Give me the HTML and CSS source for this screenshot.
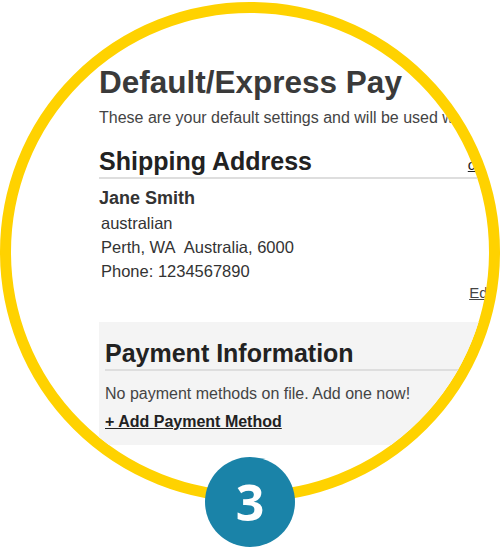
FILE: index.html
```html
<!DOCTYPE html>
<html lang="en">
<head>
    <meta charset="UTF-8">
    <title>Default/Express Pay</title>
    <link rel="stylesheet" href="styles.css">
</head>
<body>
    <div class="ring">
        <div class="panel">
            <h1>Default/Express Pay</h1>
            <p class="intro">These are your default settings and will be used when you check out with Express Pay.</p>

            <div class="section-head">
                <h2>Shipping Address</h2>
                <a href="#" class="change">change</a>
            </div>
            <div class="address">
                <div class="name">Jane Smith</div>
                <div class="line">australian</div>
                <div class="line">Perth, WA&nbsp; Australia, 6000</div>
                <div class="line">Phone: 1234567890</div>
            </div>
            <div class="edit-row"><a href="#" class="edit">Edit</a></div>

            <div class="payment">
                <h2>Payment Information</h2>
                <p class="empty">No payment methods on file. Add one now!</p>
                <a href="#" class="add">+ Add Payment Method</a>
            </div>
        </div>
    </div>
    <div class="step">3</div>
</body>
</html>
```

FILE: styles.css
```css
body {
    margin: 0;
    width: 500px;
    height: 555px;
    background-color: #fff;
    font-family: "Liberation Sans", Arial, sans-serif;
    color: #333;
    overflow: hidden;
}
.ring {
    width: 500px;
    height: 500px;
    margin-top: 2px;
    box-sizing: border-box;
    border: 11px solid #ffd200;
    border-radius: 50%;
    overflow: hidden;
    padding: 51px 0 0 88px;
}
.panel {
    width: 420px;
}
h1 {
    margin: 0;
    font-size: 31.5px;
    line-height: 36px;
    color: #3a3a3a;
}
.intro {
    margin: 8px 0 0;
    font-size: 16px;
    line-height: 20px;
    color: #444;
    white-space: nowrap;
}
.section-head {
    display: flex;
    justify-content: space-between;
    align-items: baseline;
    margin-top: 19px;
    padding-bottom: 2px;
    border-bottom: 2px solid #dedede;
}
h2 {
    margin: 0;
    font-size: 25px;
    line-height: 28px;
    color: #222;
}
.change {
    font-size: 15px;
    color: #222;
    margin-right: 2px;
}
.address {
    margin-top: 8px;
}
.name {
    font-size: 18px;
    line-height: 22px;
    font-weight: bold;
    color: #333;
    margin-bottom: 2px;
}
.line {
    font-size: 16.5px;
    line-height: 24px;
    padding-left: 2px;
    color: #333;
}
.edit-row {
    text-align: right;
    padding-right: 24px;
    font-size: 15px;
    line-height: 20px;
}
.edit {
    color: #444;
}
.payment {
    margin-top: 19px;
    background-color: #f4f4f4;
    padding: 17px 0 13px 6px;
}
.payment h2 {
    padding-bottom: 2px;
    border-bottom: 2px solid #dedede;
}
.empty {
    margin: 13px 0 0;
    font-size: 16px;
    line-height: 20px;
    color: #444;
}
.add {
    display: inline-block;
    margin-top: 8px;
    font-size: 16px;
    line-height: 20px;
    font-weight: bold;
    color: #222;
}
.step {
    width: 90px;
    height: 90px;
    margin: -45px auto 0;
    border-radius: 50%;
    background-color: #1a83a8;
    color: #fff;
    font-family: "Open Sans", sans-serif;
    font-weight: bold;
    font-size: 50px;
    line-height: 90px;
    text-align: center;
    position: relative;
}
```
